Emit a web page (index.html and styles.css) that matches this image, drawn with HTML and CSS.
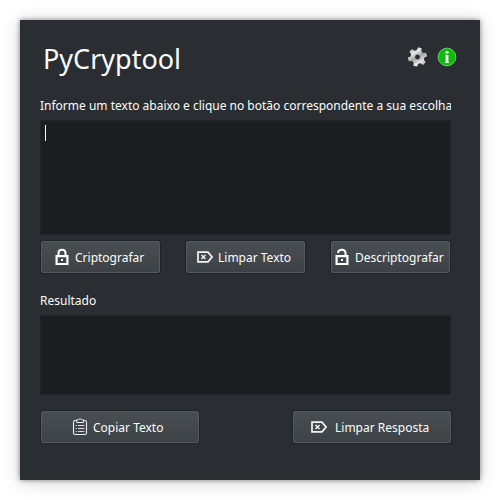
FILE: index.html
```
<!DOCTYPE html>
<html lang="pt-BR">
<head>
<meta charset="utf-8">
<title>PyCryptool</title>
<link rel="stylesheet" href="styles.css">
</head>
<body>
<svg width="0" height="0" class="defs">
  <defs>
    <linearGradient id="metal" x1="0" y1="0" x2="1" y2="1">
      <stop offset="0" stop-color="#8d8d8d"/><stop offset=".3" stop-color="#e8e8e8"/><stop offset=".5" stop-color="#a4a09e"/><stop offset=".72" stop-color="#e6e6e6"/><stop offset="1" stop-color="#909090"/>
    </linearGradient>
    <symbol id="clear" viewBox="0 0 16 16">
      <path d="M1 3.2H11L15 8L11 12.8H1Z" fill="none" stroke="#f4f4f4" stroke-width="1.7"/>
      <path d="M4.5 6L8.5 10M8.5 6L4.5 10" stroke="#f4f4f4" stroke-width="1.5"/>
    </symbol>
  </defs>
</svg>
<main class="window">
  <header class="header">
    <h1 class="title">PyCryptool</h1>
    <div class="tools">
      <svg width="20" height="20" viewBox="0 0 20 20">
        <g fill="url(#metal)" transform="translate(.5 0) rotate(14 10 10)">
          <path fill-rule="evenodd" d="M8.2 .5H11.8L12.5 3.6L14.4 4.7L17.3 3.7L19.2 6.9L16.8 8.9V11.1L19.2 13.1L17.3 16.3L14.4 15.3L12.5 16.4L11.8 19.5H8.2L7.5 16.4L5.6 15.3L2.7 16.3L.8 13.1L3.2 11.1V8.9L.8 6.9L2.7 3.7L5.6 4.7L7.5 3.6ZM10 7.6A2.4 2.4 0 1 0 10 12.4A2.4 2.4 0 1 0 10 7.6Z"/>
        </g>
      </svg>
      <svg width="20" height="20" viewBox="0 0 20 20">
        <circle cx="10" cy="10" r="8.9" fill="#0dbb0d" stroke="#7edb7e" stroke-width=".8"/>
        <circle cx="10" cy="5.2" r="1.5" fill="#fff"/>
        <path d="M8 8H11.4V15H12V16H8V15H8.6V9H8Z" fill="#fff"/>
      </svg>
    </div>
  </header>
  <p class="label label-prompt">Informe um texto abaixo e clique no botão correspondente a sua escolha</p>
  <div class="field field-input"><span class="caret"></span></div>
  <div class="row row-main">
    <button class="btn btn-lock">
      <svg width="16" height="18" viewBox="0 0 16 18"><path d="M4.5 7.5V5C4.5 .6 11.5 .6 11.5 5V7.5" fill="none" stroke="#fff" stroke-width="2"/><path d="M2.6 8.2H13.4V16H2.6Z" fill="none" stroke="#fff" stroke-width="2.2"/><path d="M7 11H9V13H7Z" fill="#fff"/></svg>
      <span class="text">Criptografar</span>
    </button>
    <button class="btn btn-clear">
      <svg width="16" height="16"><use href="#clear"/></svg>
      <span class="text">Limpar Texto</span>
    </button>
    <button class="btn btn-unlock">
      <svg width="16" height="18" viewBox="0 0 16 18"><path d="M4.2 5V4.5C4.2 .6 11.5 .6 11.5 5V7.5" fill="none" stroke="#fff" stroke-width="2"/><path d="M2.6 8.2H13.4V16H2.6Z" fill="none" stroke="#fff" stroke-width="2.2"/><path d="M7 11H9V13H7Z" fill="#fff"/></svg>
      <span class="text">Descriptografar</span>
    </button>
  </div>
  <p class="label label-result">Resultado</p>
  <div class="field field-output"></div>
  <div class="row row-result">
    <button class="btn btn-copy">
      <svg width="16" height="18" viewBox="0 0 16 18"><rect x="1.5" y="2.5" width="13" height="14" rx="1.8" fill="none" stroke="#eee" stroke-width="1.1"/><path d="M4.7 1.9H6.2C6.8 .6 9.4 .6 10 1.9H11.5V4.5H4.7Z" fill="#3f4347" stroke="#eee"/><path d="M6 7.5H12.4M6 10.5H12.4M6 13.5H12.4M3.7 7.5H4.8M3.7 10.5H4.8M3.7 13.5H4.8" stroke="#ddd"/></svg>
      <span class="text">Copiar Texto</span>
    </button>
    <button class="btn btn-reset">
      <svg width="16" height="16"><use href="#clear"/></svg>
      <span class="text">Limpar Resposta</span>
    </button>
  </div>
</main>
</body>
</html>
```
FILE: styles.css
```
* { box-sizing: border-box; }
body {
  margin: 0;
  padding: 20px;
  background: #fff;
  font-family: "Noto Sans", sans-serif;
  font-size: 12px;
  color: #fcfcfc;
}
.defs { display: block; position: absolute; }
.window {
  width: 460px;
  height: 460px;
  padding: 20px 29px 0 20px;
  background: #2a2e32;
  box-shadow: 0 0 5px rgba(0, 0, 0, .45), 0 2px 18px rgba(0, 0, 0, .17);
}
.header {
  display: flex;
  justify-content: space-between;
  height: 56px;
  padding-left: 3px;
}
.title {
  margin: 0;
  font-size: 27px;
  font-weight: 400;
  line-height: 38px;
}
.tools {
  display: flex;
  gap: 10px;
  margin: 7px -6px 0 0;
}
.label {
  margin: 0;
  height: 24px;
  line-height: 20px;
  white-space: nowrap;
}
.label-prompt {
  width: 411px;
  overflow: hidden;
}
.field {
  width: 411px;
  background: #1b1e20;
  border: 1px solid #202427;
}
.field-input { height: 115px; padding: 4px; }
.field-output { height: 80px; }
.caret {
  display: block;
  width: 1px;
  height: 16px;
  background: #fcfcfc;
}
.row { display: flex; margin: 0 0 0 1px; }
.row-main { gap: 26px; margin-top: 6px; }
.label-result { margin-top: 17px; }
.row-result { justify-content: space-between; margin-top: 16px; }
.btn {
  display: flex;
  align-items: center;
  width: 119px;
  height: 32px;
  margin: 0 0 1px;
  padding: 0;
  border: 1px solid #565b60;
  border-radius: 2px;
  background: linear-gradient(#494e52, #3d4246);
  box-shadow: 0 0 1px 1px rgba(0, 0, 0, .25);
  color: #fcfcfc;
  font: inherit;
  line-height: 18px;
  white-space: nowrap;
}
.btn svg { flex: none; }
.text { padding-top: 2px; }
.btn-lock { padding-left: 12px; gap: 5px; }
.btn-clear { padding-left: 10px; gap: 5px; }
.btn-unlock { padding-left: 2px; gap: 5px; }
.btn-copy, .btn-reset { width: 158px; }
.btn-copy { padding-left: 30px; gap: 5px; }
.btn-reset { padding-left: 17px; gap: 8px; }
```
